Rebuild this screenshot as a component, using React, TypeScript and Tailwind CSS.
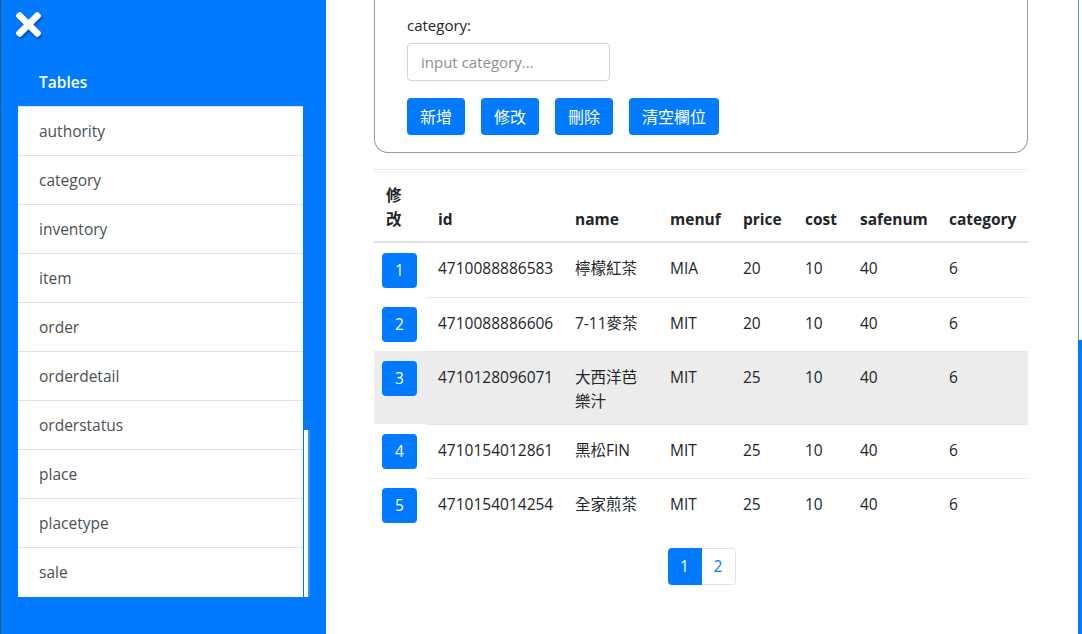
import React from "react";

const tables = ["authority","category","inventory","item","order","orderdetail","orderstatus","place","placetype","sale"];

const rows = [
  { n: 1, id: "4710088886583", name: "檸檬紅茶", menuf: "MIA", price: 20, cost: 10, safe: 40, cat: 6 },
  { n: 2, id: "4710088886606", name: "7-11麥茶", menuf: "MIT", price: 20, cost: 10, safe: 40, cat: 6 },
  { n: 3, id: "4710128096071", name: "大西洋芭樂汁", menuf: "MIT", price: 25, cost: 10, safe: 40, cat: 6 },
  { n: 4, id: "4710154012861", name: "黑松FIN", menuf: "MIT", price: 25, cost: 10, safe: 40, cat: 6 },
  { n: 5, id: "4710154014254", name: "全家煎茶", menuf: "MIT", price: 25, cost: 10, safe: 40, cat: 6 },
];

const font = { fontFamily: '"Open Sans", "Noto Sans CJK TC", sans-serif' };

function XIcon() {
  return (
    <svg width="25" height="25" viewBox="0 80 352 352" style={{ filter: "drop-shadow(1px 2px 1px rgba(0,0,0,0.35))" }}>
      <path fill="#fff" d="M242.72 256l100.07-100.07c12.28-12.28 12.28-32.19 0-44.48l-22.24-22.24c-12.28-12.28-32.19-12.28-44.48 0L176 189.280 75.93 89.21c-12.28-12.28-32.19-12.28-44.48 0L9.21 111.45c-12.28 12.28-12.28 32.19 0 44.48L109.28 256 9.21 356.07c-12.28 12.28-12.28 32.19 0 44.48l22.24 22.24c12.28 12.28 32.2 12.28 44.48 0L176 322.72l100.07 100.07c12.28 12.28 32.2 12.28 44.48 0l22.24-22.24c12.28-12.28 12.28-32.19 0-44.48L242.72 256z" />
    </svg>
  );
}

export default function App() {
  return (
    <div className="flex h-[634px] w-[1082px] overflow-hidden bg-white text-[15.5px] text-[#212529]" style={font}>
      {/* Sidebar */}
      <aside className="relative w-[326px] shrink-0 bg-[#007bff] border-l border-[#1b5e73] flex flex-col">
        <div className="pl-[15px] pt-[12px] h-[37px]">
          <XIcon />
        </div>
        <div className="pl-[38px] mt-[33px] h-[24px] leading-[24px] text-white font-semibold text-[15.5px]">Tables</div>
        <ul className="ml-[17px] mt-[12px] w-[285px] bg-white border-t border-[#cfe2ff]">
          {tables.map((t, i) => (
            <li
              key={t}
              className={`h-[49px] pl-[21px] pt-[12px] leading-[24px] text-[#495057] ${i < tables.length - 1 ? "border-b border-[#dee2e6]" : ""}`}
            >
              {t}
            </li>
          ))}
        </ul>
        <div className="absolute left-[303px] top-[430px] w-[6px] h-[167px] bg-white border-r-2 border-[#3d8df5]"></div>
      </aside>

      {/* Main */}
      <main className="flex-1 relative pl-[48px] pr-[50px]">
        <div className="border-x border-b border-[#9a9a9a] rounded-b-[14px] pl-[32px] pb-[17px]">
          <div className="pt-[14px] leading-[22px] text-[15px]">category:</div>
          <input
            className="mt-[7px] w-[203px] h-[38px] border border-[#ced4da] rounded-[4px] px-[13px] text-[15px] placeholder:text-[#8a9096] outline-none"
            style={font}
            placeholder="input category..."
          />
          <div className="flex gap-[16px] mt-[17px]">
            {["新增", "修改", "刪除", "清空欄位"].map((b) => (
              <button
                key={b}
                className="h-[37px] px-[13px] bg-[#007bff] text-white rounded-[4px] text-[16px] leading-[24px]"
                style={font}
              >
                {b}
              </button>
            ))}
          </div>
        </div>

        <div className="mt-[16px] border-t border-[#e9e9e9]"></div>

        <table className="mt-[1px] w-[654px] table-fixed border-collapse">
          <colgroup>
            <col style={{ width: 52 }} />
            <col style={{ width: 137 }} />
            <col style={{ width: 95 }} />
            <col style={{ width: 73 }} />
            <col style={{ width: 62 }} />
            <col style={{ width: 55 }} />
            <col style={{ width: 89 }} />
            <col style={{ width: 91 }} />
          </colgroup>
          <thead>
            <tr className="border-b-2 border-[#dee2e6] border-t border-t-[#f2f2f2]">
              {["修改", "id", "name", "menuf", "price", "cost", "safenum", "category"].map((h) => (
                <th key={h} className="text-left align-bottom font-bold pt-[11px] pb-[10px] px-[12px] leading-[24px] whitespace-normal">
                  {h}
                </th>
              ))}
            </tr>
          </thead>
          <tbody>
            {rows.map((r) => (
              <tr key={r.n} className={r.n === 3 ? "bg-[#ececec]" : ""}>
                <td className="align-top pt-[10px] pb-[9px] pl-[8px]">
                  <div className="w-[35px] h-[35px] rounded-[4px] bg-[#007bff] text-white flex items-center justify-center text-[15.5px]">
                    {r.n}
                  </div>
                </td>
                {[r.id, r.name, r.menuf, r.price, r.cost, r.safe, r.cat].map((v, i) => (
                  <td key={i} className={`align-top pt-[13px] pb-[11px] px-[12px] leading-[24px] ${r.n > 1 ? "border-t border-[#e6e6e6]" : ""}`}>
                    {v}
                  </td>
                ))}
              </tr>
            ))}
          </tbody>
        </table>

        <div className="flex justify-center mt-[16px] pl-[1px]">
          <div className="flex h-[37px] rounded-[4px] overflow-hidden">
            <div className="w-[34px] bg-[#007bff] text-white flex items-center justify-center">1</div>
            <div className="w-[34px] border border-l-0 border-[#dee2e6] rounded-r-[4px] text-[#007bff] flex items-center justify-center">2</div>
          </div>
        </div>
      </main>

      {/* Right edge */}
      <div className="w-[4px] shrink-0 flex flex-col">
        <div className="h-[340px] border-l border-[#5b8fc7]"></div>
        <div className="flex-1 bg-[#007bff]"></div>
      </div>
    </div>
  );
}
